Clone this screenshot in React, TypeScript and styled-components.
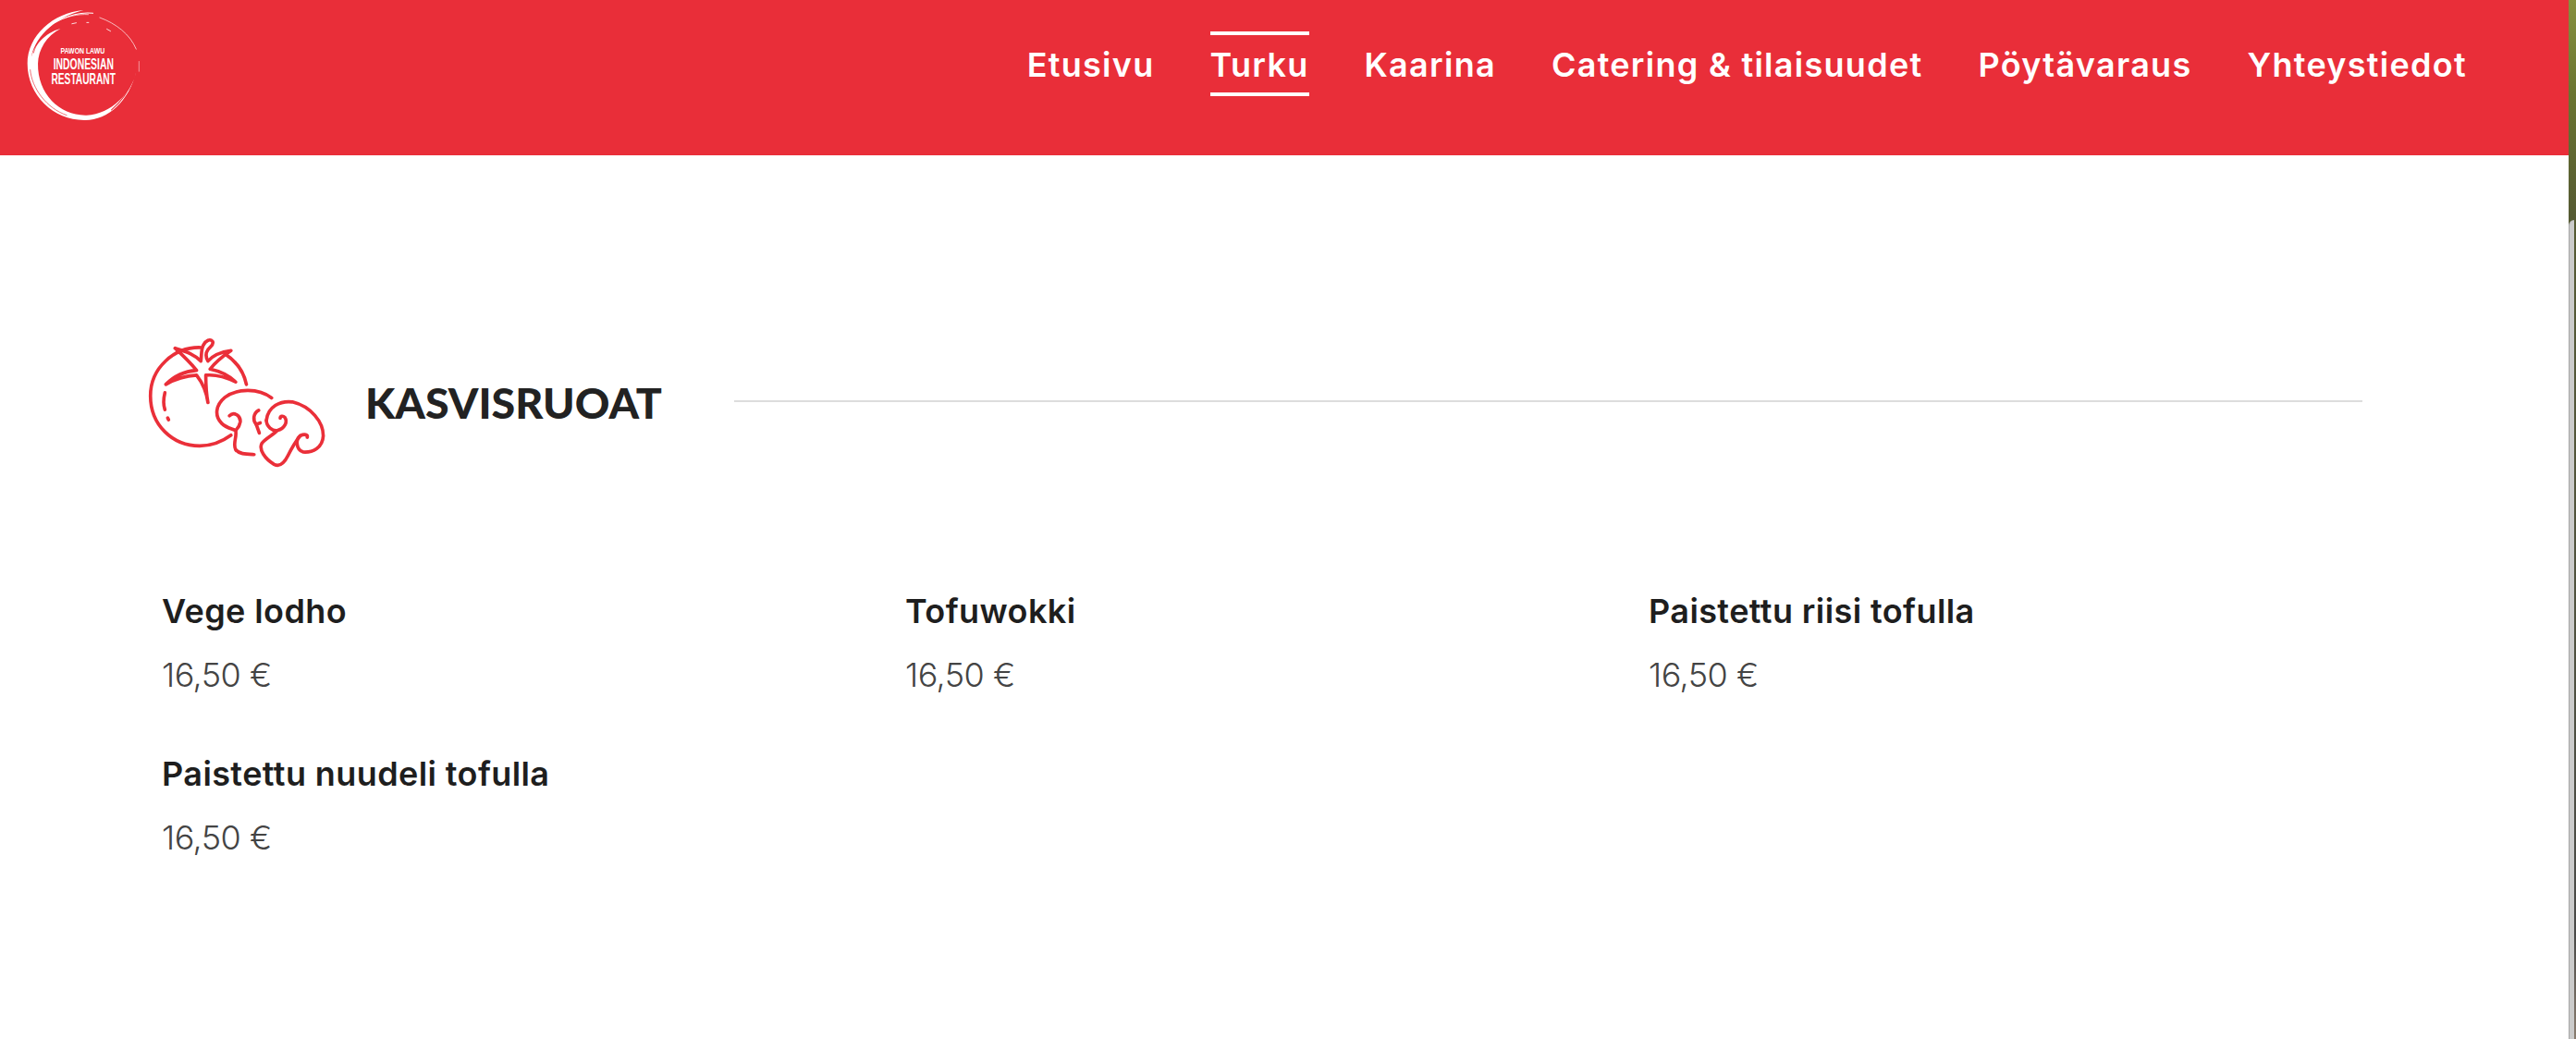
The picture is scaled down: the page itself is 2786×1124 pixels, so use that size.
import React from 'react'
import styled, { createGlobalStyle } from 'styled-components'

const GlobalStyle = createGlobalStyle`
  html, body {
    margin: 0;
    padding: 0;
    background: #fff;
    overflow: hidden;
  }
`

const navItems = ['Etusivu', 'Turku', 'Kaarina', 'Catering & tilaisuudet', 'Pöytävaraus', 'Yhteystiedot']
const dishes = ['Vege lodho', 'Tofuwokki', 'Paistettu riisi tofulla', 'Paistettu nuudeli tofulla']

const Logo = () => (
  <LogoSvg viewBox="80 20 380 380" width="127" height="127">
    <path
      fill="#fff"
      d="M270 32C170 40 88 115 88 205C88 310 175 390 275 388C350 386 415 330 441 228C425 300 360 368 280 372C195 375 120 305 122 205C123 160 150 115 195 92C145 105 105 150 100 190C105 130 170 55 270 32Z"
    />
    <g fill="none" stroke="#e92e39" strokeLinecap="round">
      <path d="M97 225C102 285 150 350 215 372" strokeWidth="2" />
      <path d="M108 170C115 140 135 115 160 98" strokeWidth="2" />
      <path d="M360 355C390 330 415 295 430 255" strokeWidth="3" />
    </g>
    <g fill="none" stroke="#fff" strokeLinecap="round">
      <path d="M300 42C240 35 150 70 112 135" strokeWidth="3" />
      <path d="M175 72C215 52 250 44 285 46" strokeWidth="2" />
      <path d="M322 56C375 75 420 110 440 158" strokeWidth="2" />
      <path d="M449 198V230" strokeWidth="1.5" />
      <path d="M232 76l14-3M280 72h6M345 93l12 7" strokeWidth="2.5" />
    </g>
    <g fill="#fff" fontFamily="'Liberation Sans Narrow', 'Liberation Sans', sans-serif" fontWeight="700">
      <text x="195" y="172" fontSize="26" textLength="143" lengthAdjust="spacingAndGlyphs">PAWON LAWU</text>
      <text x="172" y="222" fontSize="47" textLength="195" lengthAdjust="spacingAndGlyphs">INDONESIAN</text>
      <text x="165" y="270" fontSize="47" textLength="208" lengthAdjust="spacingAndGlyphs">RESTAURANT</text>
    </g>
  </LogoSvg>
)

const VeggieIcon = () => (
  <svg viewBox="60 75 580 430" width="193" height="143" fill="none" stroke="#ea2f39" strokeWidth="11" strokeLinecap="round" strokeLinejoin="round">
    <path d="M380 228C372 190 350 155 312 130" />
    <path d="M232 108C145 105 68 175 68 265C68 360 140 428 228 428C265 428 300 415 330 393" />
    <path d="M118 228C145 200 180 185 218 182C200 160 175 135 148 110C175 120 205 125 232 152C235 130 232 115 240 100C248 85 262 78 270 88C276 98 262 105 255 115C248 125 248 140 255 152C275 130 300 122 330 118C305 135 280 155 262 178C295 185 325 200 345 220C315 205 280 195 248 198C248 230 250 260 255 287C250 250 235 220 218 198C180 200 145 212 118 228Z" />
    <path d="M115 255C110 275 110 295 115 310" />
    <path d="M124 337l3 6" />
    <path d="M462 272C420 240 350 240 310 270C280 295 275 330 300 355C315 370 335 372 345 378C350 400 335 420 345 440C355 455 380 455 405 456" />
    <path d="M325 330C340 315 362 330 360 350C358 365 350 372 345 378" />
    <path d="M420 312C402 322 400 345 412 358L422 386" />
    <path d="M412 358l13-5" />
    <path d="M445 345C450 300 490 280 530 285C590 300 630 350 630 395C628 435 595 450 565 448C540 440 540 405 555 395C570 388 580 392 578 400" />
    <path d="M445 345C445 365 465 380 480 378C505 372 515 350 505 335C498 328 490 332 490 338" />
    <path d="M478 380C470 390 440 405 430 420C420 440 440 470 470 488C490 498 505 480 515 460C525 440 535 420 555 395" />
  </svg>
)

const App: React.FC = () => {
  return (
    <Page>
      <GlobalStyle />
      <Content>
        <Header>
          <Logo />
          <Nav>
            {navItems.map((item) => (
              <NavLink key={item} $active={item === 'Turku'}>{item}</NavLink>
            ))}
          </Nav>
        </Header>
        <Main>
          <SectionTitle>
            <IconHolder><VeggieIcon /></IconHolder>
            <Heading>KASVISRUOAT</Heading>
            <Rule />
          </SectionTitle>
          <DishGrid>
            {dishes.map((dish) => (
              <Dish key={dish}>
                <DishName>{dish}</DishName>
                <Price>16,50 €</Price>
              </Dish>
            ))}
          </DishGrid>
        </Main>
      </Content>
      <SideStrip><ScrollThumb /></SideStrip>
    </Page>
  )
}

export default App

const Page = styled.div`
  display: flex;
  width: 2786px;
  height: 1124px;
  font-family: Inter, 'Noto Sans', sans-serif;
  overflow: hidden;
`

const Content = styled.div`
  flex: 1;
  min-width: 0;
  background: #fff;
`

const Header = styled.header`
  display: flex;
  justify-content: space-between;
  height: 168px;
  padding: 7px 110px 0 27px;
  box-sizing: border-box;
  background: #e92e39;
`

const LogoSvg = styled.svg`
  flex: none;
  overflow: visible;
`

const Nav = styled.nav`
  display: flex;
  gap: 60px;
  height: 70px;
  margin-top: 27px;
`

const NavLink = styled.a<{ $active?: boolean }>`
  display: flex;
  align-items: center;
  height: 70px;
  padding-top: 2px;
  box-sizing: border-box;
  border-top: 4px solid ${({ $active }) => ($active ? '#fff' : 'transparent')};
  border-bottom: 4px solid ${({ $active }) => ($active ? '#fff' : 'transparent')};
  color: #fff;
  font-size: 36px;
  font-weight: 600;
  letter-spacing: 1.28px;
  white-space: nowrap;
`

const Main = styled.main`
  padding: 197px 223px 0 160px;
`

const SectionTitle = styled.div`
  display: flex;
  align-items: center;
  height: 143px;
`

const IconHolder = styled.div`
  display: flex;
  flex: none;
  width: 235px;
`

const Heading = styled.h2`
  flex: none;
  margin: 0 78px 0 0;
  padding-bottom: 3px;
  color: #222;
  font-family: Lato, sans-serif;
  font-size: 46.5px;
  font-weight: 900;
  white-space: nowrap;
`

const Rule = styled.div`
  flex: 1;
  height: 2px;
  margin-bottom: 5px;
  background: #ddd;
`

const DishGrid = styled.div`
  display: grid;
  grid-template-columns: repeat(3, 804px);
  row-gap: 63px;
  margin-top: 131px;
  padding-left: 15px;
`

const Dish = styled.div`
  display: flex;
  flex-direction: column;
  gap: 25px;
`

const DishName = styled.div`
  color: #1e1e1e;
  font-size: 36px;
  font-weight: 600;
  letter-spacing: 0.4px;
  line-height: 44px;
`

const Price = styled.div`
  color: #444;
  font-size: 36px;
  font-weight: 300;
  letter-spacing: -0.5px;
  line-height: 44px;
`

const SideStrip = styled.div`
  position: relative;
  flex: none;
  width: 8px;
  background: linear-gradient(180deg, #87903f 0%, #6a7430 9%, #555a33 21%, #4a4a48 90%, #8a7d70 100%);
`

const ScrollThumb = styled.div`
  position: absolute;
  top: 238px;
  left: 0;
  right: 2px;
  bottom: 0;
  box-sizing: border-box;
  background: #cbcbcb;
  border-left: 1px solid #a6a6a6;
  border-top-left-radius: 6px;
`
